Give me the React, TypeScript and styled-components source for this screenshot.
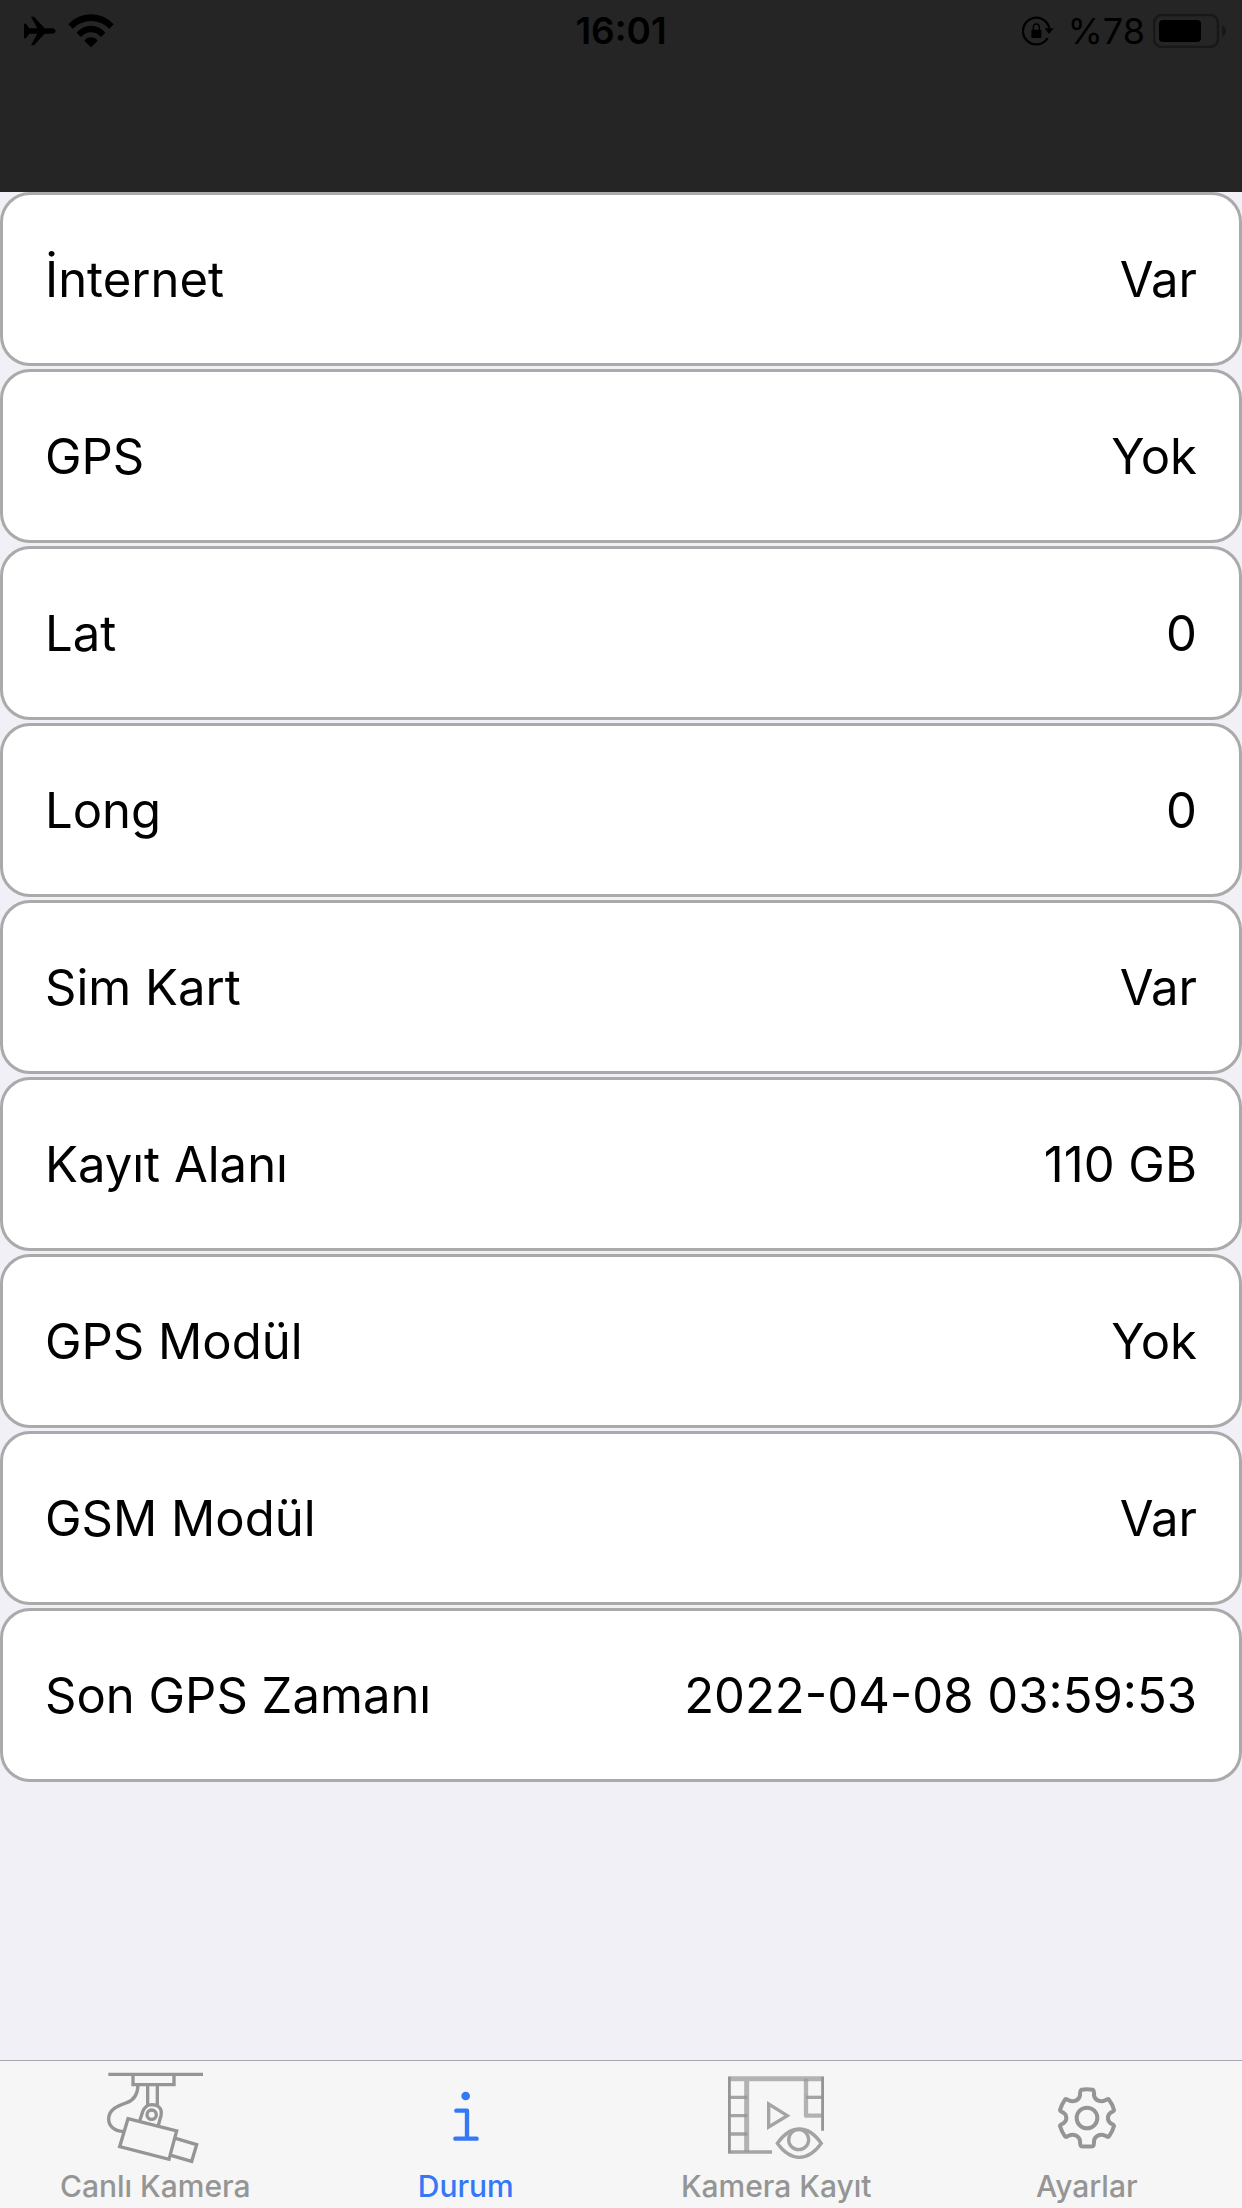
import React, { useState } from 'react';
import styled, { createGlobalStyle } from 'styled-components';

const GlobalStyle = createGlobalStyle`
  *, *::before, *::after { box-sizing: border-box; }
  body {
    margin: 0;
    background: #f1f0f6;
    color: #000;
    font-family: Inter, "Liberation Sans", sans-serif;
  }
`;

const Screen = styled.div`
  display: flex;
  flex-direction: column;
  min-height: 100vh;
`;

const Header = styled.header`
  height: 192px;
  background: #252525;
`;

const StatusBar = styled.div`
  display: grid;
  grid-template-columns: 1fr auto 1fr;
  align-items: center;
  height: 62px;
  padding: 0 16px;
  font-size: 36px;
  line-height: 40px;
`;

const StatusGroup = styled.div<{ $end?: boolean }>`
  display: flex;
  align-items: center;
  justify-content: ${(p) => (p.$end ? 'flex-end' : 'flex-start')};
  gap: ${(p) => (p.$end ? 8 : 12)}px;
  padding-left: 8px;
`;

const Clock = styled.time`
  font-size: 37px;
  font-weight: 600;
`;

const LockIcon = styled.svg`
  margin-right: 6px;
`;

const Main = styled.main`
  flex: 1;
`;

const StatusList = styled.dl`
  display: flex;
  flex-direction: column;
  gap: 3px;
  margin: 0;
`;

const Row = styled.div`
  display: flex;
  align-items: center;
  justify-content: space-between;
  height: 174px;
  padding: 2px 42px 0;
  border: 3px solid #aaa;
  border-radius: 30px;
  background: #fff;
  font-size: 49px;
  line-height: 60px;
`;

const Label = styled.dt``;

const Value = styled.dd`
  margin: 0;
`;

const TabBar = styled.nav`
  display: grid;
  grid-template-columns: repeat(4, 1fr);
  border-top: 1px solid #a7a6ab;
  background: #f6f6f6;
`;

const Tab = styled.button<{ $active: boolean }>`
  display: flex;
  flex-direction: column;
  align-items: center;
  gap: 2px;
  padding: 9px 0 4px;
  border: 0;
  background: none;
  color: ${(p) => (p.$active ? '#3478f6' : '#959595')};
  font: 500 30px/36px Inter, "Liberation Sans", sans-serif;
  cursor: pointer;
`;

const PlaneIcon = () => (
  <svg width="32" height="30" viewBox="72 50 96 90" aria-hidden="true">
    <path d="M72 73h6l10 14h24L93 52h9l32 35h24q9 2 9 8t-9 8h-24l-32 35h-9l19-35H88l-10 14h-6V95z" />
  </svg>
);

const WifiIcon = () => (
  <svg width="46" height="34" viewBox="204 38 138 102" aria-hidden="true">
    <path d="M205 69Q233 39 273 39T341 69L328 82Q305 59 273 59T218 82zM230 94Q248 73 273 73T316 94L303 107Q291 93 273 93T243 107zM253 118Q261 108 273 108T293 118L273 138z" />
  </svg>
);

const RotationLockIcon = () => (
  <LockIcon width="32" height="30" viewBox="71 51 96 90" aria-hidden="true">
    <path d="M148 117A40 40 0 1 1 153 88" fill="none" stroke="#000" strokeWidth="7" />
    <path d="M139 88h27l-14 17z" />
    <rect x="99" y="92" width="30" height="25" rx="3" />
    <path d="M105 94v-9q0-10 9-10t9 10v9" fill="none" stroke="#000" strokeWidth="4" />
  </LockIcon>
);

const BatteryIcon = () => (
  <svg width="73" height="34" viewBox="0 0 73 34" aria-hidden="true">
    <rect x="1" y="1" width="64" height="32" rx="8" fill="none" stroke="#181818" strokeWidth="2.5" />
    <rect x="6" y="6" width="42" height="22" rx="4" />
    <path d="M69 11q4 2 4 6t-4 6z" fill="#181818" />
  </svg>
);

const CameraIcon = () => (
  <svg width="96" height="96" viewBox="204 60 288 288" fill="none" stroke="currentColor" strokeWidth="10" aria-hidden="true">
    <path d="M208 73H492" />
    <path d="M282 77v27h123V77M326 106v60M355 106v60" />
    <path d="M297 106C296 132 283 151 263 158C236 168 209 177 209 208C209 228 226 243 252 244" />
    <path d="M302 213L311 185Q320 164 338 164Q372 166 366 197L358 226" />
    <circle cx="338" cy="194" r="14" />
    <path d="M267 206L413 243L390 328L242 290zM410 265L473 284L458 334L396 316" />
  </svg>
);

const InfoIcon = () => (
  <svg width="96" height="96" viewBox="113 60 288 288" fill="none" stroke="currentColor" aria-hidden="true">
    <circle cx="256" cy="138" r="13" fill="currentColor" stroke="none" />
    <path d="M228 182H260V266M225 266H289" strokeWidth="13" strokeLinecap="round" strokeLinejoin="round" />
  </svg>
);

const FilmIcon = () => (
  <svg width="96" height="96" viewBox="204 60 288 288" fill="none" stroke="currentColor" aria-hidden="true">
    <path d="M204 86H492M260 86V306" strokeWidth="15" opacity="0.7" />
    <path d="M208 80V310M488 80V242" strokeWidth="9" />
    <path d="M208 142H262M208 197H262M208 252H262M205 306H336" strokeWidth="10" opacity="0.85" />
    <path d="M438 86V197H488" strokeWidth="13" strokeLinejoin="round" opacity="0.7" />
    <path d="M438 142H488" strokeWidth="10" opacity="0.85" />
    <path d="M326 162V231L382 197z" strokeWidth="10" opacity="0.85" />
    <g strokeWidth="10" opacity="0.85">
      <path d="M352 280Q382 237 418 237T484 280Q454 322 418 322T352 280z" />
      <circle cx="416" cy="269" r="30" />
    </g>
  </svg>
);

const GearIcon = () => (
  <svg width="96" height="96" viewBox="114 60 288 288" fill="none" stroke="currentColor" strokeWidth="12" strokeLinejoin="round" aria-hidden="true">
    <path d="M241 119Q258 117 275 119Q280 121 279 136C282 152 299 158 313 151Q321 145 324 149Q335 163 339 180Q339 184 329 188C318 196 318 212 329 220Q339 224 339 228Q334 246 324 259Q321 263 313 257C299 250 282 256 279 272Q280 287 275 289Q258 290 241 289Q237 287 237 272C234 256 217 250 203 257Q195 263 192 259Q182 246 177 228Q177 224 187 220C199 212 199 196 187 188Q177 184 177 180Q182 163 192 149Q195 145 203 151C217 158 234 152 237 136Q237 121 241 119z" />
    <circle cx="258" cy="204" r="31" />
  </svg>
);

const rows = [
  { label: 'İnternet', value: 'Var' },
  { label: 'GPS', value: 'Yok' },
  { label: 'Lat', value: '0' },
  { label: 'Long', value: '0' },
  { label: 'Sim Kart', value: 'Var' },
  { label: 'Kayıt Alanı', value: '110 GB' },
  { label: 'GPS Modül', value: 'Yok' },
  { label: 'GSM Modül', value: 'Var' },
  { label: 'Son GPS Zamanı', value: '2022-04-08 03:59:53' },
];

const tabs = [
  { label: 'Canlı Kamera', Icon: CameraIcon },
  { label: 'Durum', Icon: InfoIcon },
  { label: 'Kamera Kayıt', Icon: FilmIcon },
  { label: 'Ayarlar', Icon: GearIcon },
];

export default function App() {
  const [active, setActive] = useState('Durum');

  return (
    <Screen lang="tr">
      <GlobalStyle />
      <Header>
        <StatusBar>
          <StatusGroup>
            <PlaneIcon />
            <WifiIcon />
          </StatusGroup>
          <Clock>16:01</Clock>
          <StatusGroup $end>
            <RotationLockIcon />
            <span>%78</span>
            <BatteryIcon />
          </StatusGroup>
        </StatusBar>
      </Header>
      <Main>
        <StatusList>
          {rows.map((row) => (
            <Row key={row.label}>
              <Label>{row.label}</Label>
              <Value>{row.value}</Value>
            </Row>
          ))}
        </StatusList>
      </Main>
      <TabBar>
        {tabs.map(({ label, Icon }) => (
          <Tab
            key={label}
            type="button"
            $active={label === active}
            aria-current={label === active ? 'page' : undefined}
            onClick={() => setActive(label)}
          >
            <Icon />
            {label}
          </Tab>
        ))}
      </TabBar>
    </Screen>
  );
}
